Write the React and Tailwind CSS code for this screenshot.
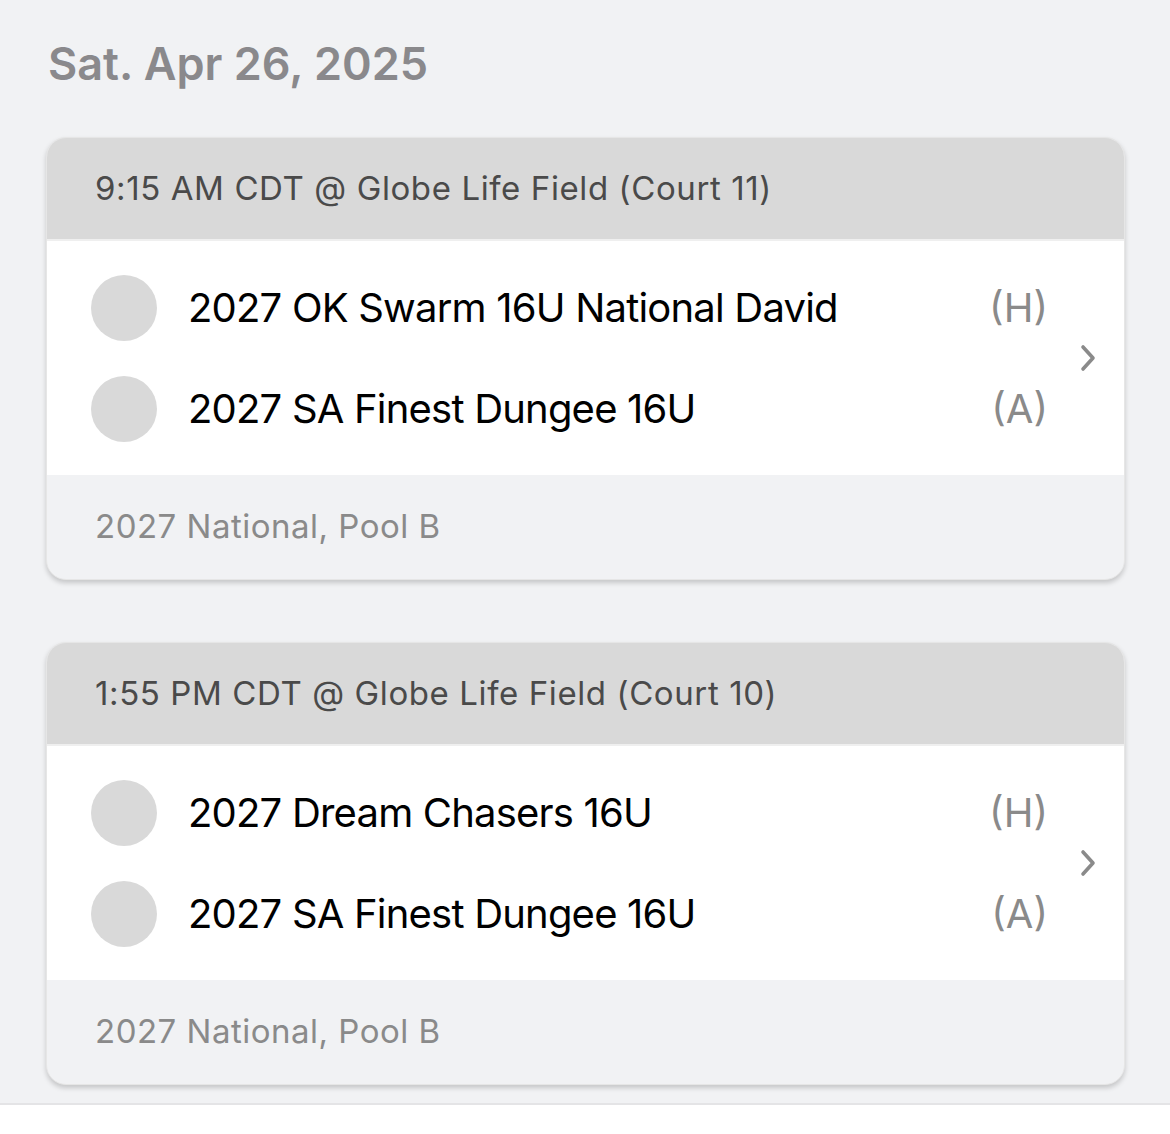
import React from "react";

const games = [
  {
    header: "9:15 AM CDT @ Globe Life Field (Court 11)",
    home: "2027 OK Swarm 16U National David",
    away: "2027 SA Finest Dungee 16U",
    footer: "2027 National, Pool B",
  },
  {
    header: "1:55 PM CDT @ Globe Life Field (Court 10)",
    home: "2027 Dream Chasers 16U",
    away: "2027 SA Finest Dungee 16U",
    footer: "2027 National, Pool B",
  },
];

function TeamRow({ name, tag }) {
  return (
    <div className="flex items-center h-[66px]">
      <div className="w-[66px] h-[66px] rounded-full bg-[#d9d9d9] shrink-0" />
      <div className="ml-[31px] flex-1 text-[40px] leading-none text-black tracking-[-0.8px]">{name}</div>
      <div className="text-[40px] leading-none text-[#8a8a8a] mr-[-2px]">{tag}</div>
    </div>
  );
}

function Card({ g }) {
  return (
    <div className="rounded-[20px] bg-[#f1f2f4] shadow-[0_3px_5px_rgba(0,0,0,0.18)] border border-[#e6e6e6] overflow-hidden">
      <div className="h-[103px] bg-[#d9d9d9] flex items-center pl-[48px] text-[33px] tracking-[0.6px] text-[#4a4a4a] border-b-2 border-[#efefef]">
        {g.header}
      </div>
      <div className="bg-white flex items-center h-[234px] pl-[44px] pr-[26px]">
        <div className="flex-1 flex flex-col gap-[35px]">
          <TeamRow name={g.home} tag="(H)" />
          <TeamRow name={g.away} tag="(A)" />
        </div>
        <svg width="20" height="28" viewBox="0 0 20 28" className="ml-[32px] shrink-0">
          <path d="M5 3 L15 14 L5 25" fill="none" stroke="#8a8a8a" strokeWidth="3.6" strokeLinecap="round" strokeLinejoin="round" />
        </svg>
      </div>
      <div className="h-[104px] flex items-center pl-[48px] text-[33px] tracking-[0.5px] text-[#8a8a8a]">
        {g.footer}
      </div>
    </div>
  );
}

export default function App() {
  return (
    <div className="w-[1170px] h-[1134px] bg-white" style={{ fontFamily: "Inter, 'Noto Sans', sans-serif" }}>
      <div className="bg-[#f1f2f4] h-[1105px] border-b-2 border-[#e4e4e6] px-[46px] pr-[45px]">
        <div className="h-[137px] flex items-center pl-[2px] pb-[10px] text-[45px] font-semibold text-[#8a898c]">
          Sat. Apr 26, 2025
        </div>
        <div className="flex flex-col gap-[62px]">
          {games.map((g, i) => (
            <Card key={i} g={g} />
          ))}
        </div>
      </div>
    </div>
  );
}
